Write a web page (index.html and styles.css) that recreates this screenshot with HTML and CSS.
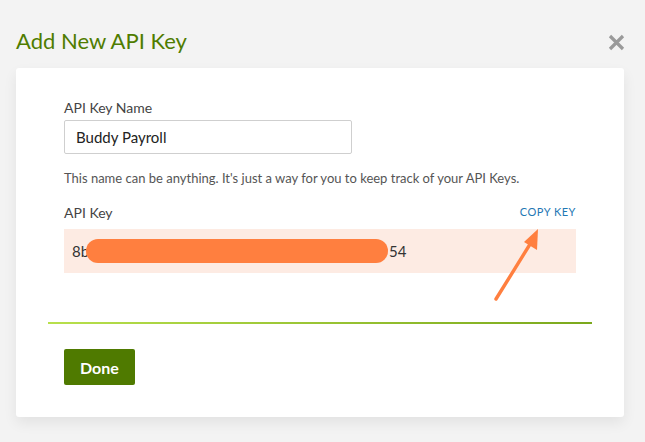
FILE: index.html
```html
<!DOCTYPE html>
<html lang="en">
<head>
<meta charset="utf-8">
<title>Add New API Key</title>
<link rel="stylesheet" href="styles.css">
</head>
<body>
  <div class="modal">
    <header class="modal-head">
      <h1 class="modal-title">Add New API Key</h1>
      <button class="close" aria-label="Close">
        <svg width="17" height="17" viewBox="0 0 17 17">
          <path d="M2 2 L15 15 M15 2 L2 15" stroke="#9a9a9a" stroke-width="3.2" stroke-linecap="butt" fill="none"/>
        </svg>
      </button>
    </header>

    <section class="card">
      <div class="fields">
        <label class="label" for="key-name">API Key Name</label>
        <input class="input" id="key-name" type="text" value="Buddy Payroll">
        <p class="help">This name can be anything. It's just a way for you to keep track of your API Keys.</p>

        <div class="key-head">
          <span class="label">API Key</span>
          <a class="copy" href="#">COPY KEY</a>
        </div>
        <div class="key-box">
          <span class="key-text">8b<span class="redact"></span>54</span>
          <svg class="pointer" width="60" height="80" viewBox="0 0 60 80">
            <path d="M8 75 L44 17" stroke="#ff7f3f" stroke-width="3.4" stroke-linecap="round" fill="none"/>
            <path d="M50 5 L49 26 L36 18 Z" fill="#ff7f3f"/>
          </svg>
        </div>
      </div>

      <hr class="divider">

      <div class="actions">
        <button class="done">Done</button>
      </div>
    </section>
  </div>
</body>
</html>
```

FILE: styles.css
```css
* {
  box-sizing: border-box;
}

html, body {
  margin: 0;
  padding: 0;
}

body {
  background: #f3f3f3;
  font-family: Lato, "Open Sans", sans-serif;
  color: #333;
  width: 645px;
  height: 442px;
  overflow: hidden;
}

.modal {
  padding: 0 21px 0 16px;
}

.modal-head {
  display: flex;
  align-items: center;
  justify-content: space-between;
  padding-top: 27px;
  height: 58px;
}

.modal-title {
  margin: 0;
  margin-top: -3px;
  font-size: 22px;
  font-weight: 400;
  line-height: 30px;
  color: #4f7c00;
}

.close {
  border: 0;
  background: none;
  padding: 0;
  margin-right: -1px;
  width: 17px;
  height: 17px;
  display: flex;
}

.card {
  margin-top: 10px;
  background: #fff;
  border-radius: 3px;
  box-shadow: 0 6px 14px rgba(0, 0, 0, 0.07);
  padding: 31px 32px 32px;
}

.fields {
  padding: 0 16px;
}

.label {
  display: block;
  font-size: 14px;
  line-height: 17px;
  color: #444;
}

.input {
  display: block;
  margin-top: 4px;
  width: 288px;
  height: 34px;
  border: 1px solid #cfcfcf;
  border-radius: 2px;
  padding: 0 11px;
  font-family: inherit;
  font-size: 15px;
  color: #222;
  outline: none;
}

.help {
  margin: 16px 0 0;
  font-size: 13px;
  line-height: 16px;
  color: #555;
}

.key-head {
  display: flex;
  justify-content: space-between;
  align-items: flex-end;
  margin-top: 18px;
}

.copy {
  font-size: 11px;
  letter-spacing: 0.5px;
  line-height: 14px;
  color: #1f78b4;
  text-decoration: none;
  margin-bottom: 2px;
}

.key-box {
  position: relative;
  margin-top: 8px;
  height: 44px;
  background: #fdebe3;
  display: flex;
  align-items: center;
  padding: 0 8px;
}

.key-text {
  display: flex;
  align-items: center;
  font-size: 15px;
  color: #333;
}

.redact {
  display: inline-block;
  width: 302px;
  height: 24px;
  margin-left: -3px;
  margin-right: 1px;
  border-radius: 12px;
  background: #ff7f3f;
}

/* callout arrow pointing at the copy link */
.pointer {
  position: absolute;
  left: 424px;
  top: -5px;
}

.divider {
  margin: 49px 0 0;
  border: 0;
  height: 2px;
  background: linear-gradient(90deg, #b8e04c, #7ba81c);
}

.actions {
  padding: 25px 16px 0;
}

.done {
  height: 36px;
  padding: 0 16px;
  border: 0;
  border-radius: 2px;
  background: #4f7a00;
  color: #fff;
  font-family: inherit;
  font-size: 16px;
  font-weight: 700;
}
```
